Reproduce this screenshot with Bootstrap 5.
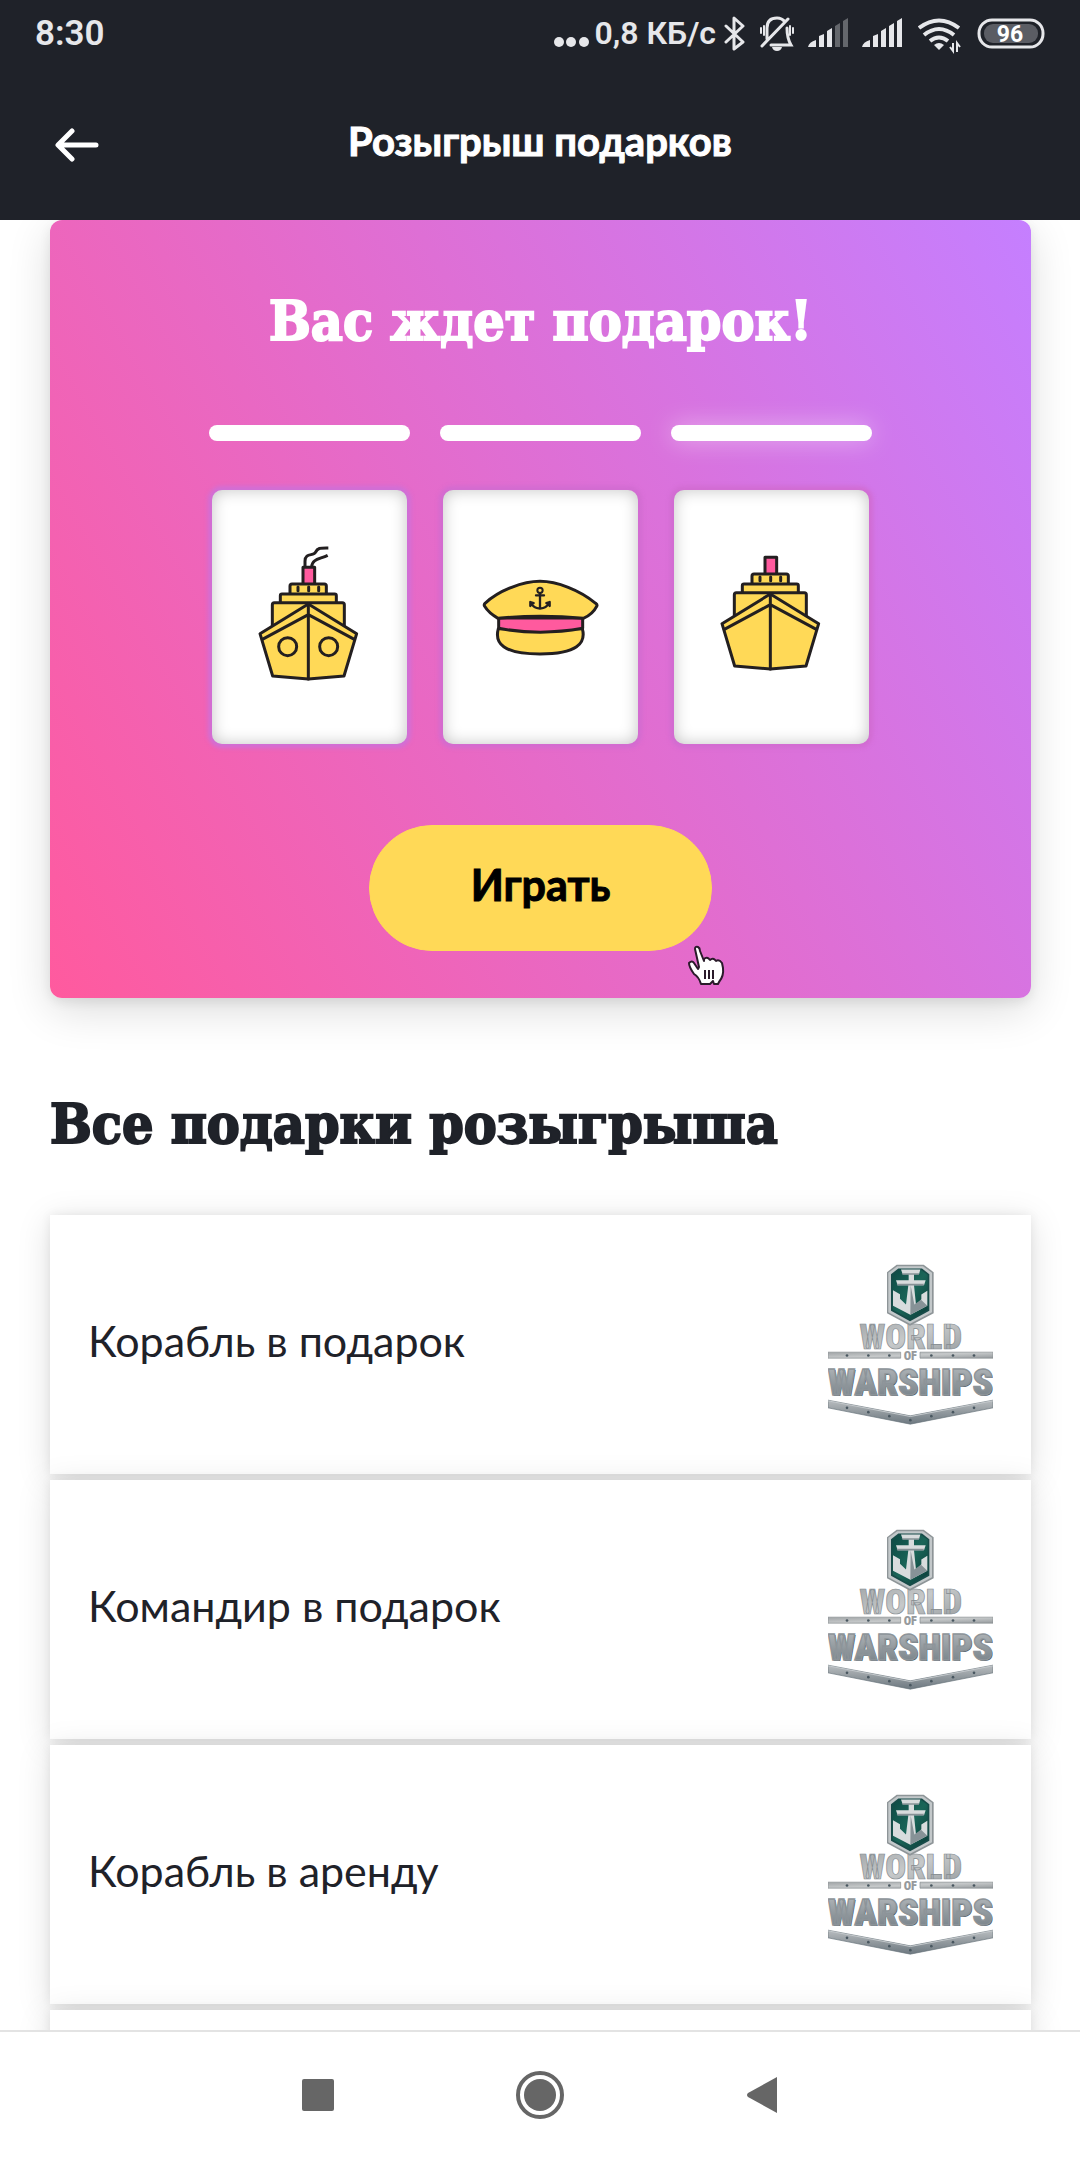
<!DOCTYPE html>
<html lang="ru">
<head>
<meta charset="utf-8">
<meta name="viewport" content="width=device-width, initial-scale=1">
<title>Розыгрыш подарков</title>
<link href="https://cdn.jsdelivr.net/npm/bootstrap@5.3.0/dist/css/bootstrap.min.css" rel="stylesheet">
<style>
  body { font-family: Lato, "Noto Sans", sans-serif; color: #1f2229; background: #fff; }
  .app-top { background: #1f2229; }
  .status-line { height: 66px; padding: 0 35px; font: 600 32px/48px Roboto, sans-serif; color: #e6e7ea; }
  .clock { font-size: 35px; padding-top: 2px; }
  .status-icons svg { flex: none; display: block; }
  .status-icons .icon-step { margin-left: 14px; }
  .title-line { height: 154px; padding: 0 55px; }
  .back-link { width: 44px; padding-top: 3px; }
  .screen-title { font-size: 40px; line-height: 48px; font-weight: 700; padding-bottom: 4px; -webkit-text-stroke: 1px currentColor; }
  .page-area { padding: 0 49px 0 50px; min-height: 0; }
  .slab { font-family: "DejaVu Serif Condensed", "DejaVu Serif", serif; font-weight: 700; font-size: 55px; line-height: 64px; -webkit-text-stroke: 2px currentColor; }
  .promo { background: linear-gradient(60deg, #ff5a9e, #c57fff); border-radius: 12px; height: 778px; padding-top: 69px; box-shadow: 0 12px 44px rgba(0,0,0,.14), 0 4px 12px rgba(0,0,0,.08); }
  .reels { gap: 30px; margin-top: 72px; }
  .reel { width: 201px; }
  .reel-bar { height: 16px; width: 201px; border-radius: 8px; background: #fff; margin-bottom: 49px; }
  .reel-bar.lit { box-shadow: 0 0 24px rgba(255,255,255,.45); }
  .reel-face { width: 195px; height: 254px; border-radius: 10px; background: #fff; box-shadow: inset 0 0 16px rgba(0,0,0,.24), 0 0 4px 4px rgba(208,107,208,.9); }
  .reel-face.cool { box-shadow: inset 0 0 16px rgba(0,0,0,.24), 0 0 4px 4px rgba(205,112,216,.9); }
  .reel-face svg { display: block; width: 100%; height: 100%; }
  .play-btn { margin-top: 81px; width: 343px; height: 126px; padding-bottom: 12px; font-size: 43px; font-weight: 700; line-height: 48px; --bs-btn-bg: #ffd957; --bs-btn-color: #000; --bs-btn-border-color: #ffd957; --bs-btn-hover-bg: #ffd044; -webkit-text-stroke: 1px currentColor; }
  .play-wrap { width: 343px; }
  .pointer { position: absolute; left: 317px; bottom: -35px; }
  .gifts-title { margin: 94px 0 59px; }
  .gifts { gap: 6px; }
  .gift { height: 259px; flex: none; padding: 0 38px; font-size: 43px; line-height: 52px; background: #fff; color: inherit; box-shadow: 0 6px 32px rgba(0,0,0,.13), 0 0 10px rgba(0,0,0,.07); }
  .gift span { padding-bottom: 8px; }
  .logo-word { font-family: "Liberation Sans Narrow", "Roboto Condensed", Roboto, sans-serif; font-weight: 900; }
  .sys-nav { height: 130px; border-top: 2px solid #e3e3e3; padding-bottom: 2px; background: #fff; gap: 173px; z-index: 2; }
  .sys-nav .btn { width: 49px; height: 49px; }
</style>
</head>
<body>
<svg width="0" height="0" class="position-absolute" aria-hidden="true">
  <defs>
    <linearGradient id="steel" x1="0" y1="0" x2="0" y2="1"><stop offset="0" stop-color="#b9bdc0"/><stop offset=".55" stop-color="#8e969b"/><stop offset="1" stop-color="#6e7981"/></linearGradient>
    <linearGradient id="silver" x1="0" y1="0" x2="1" y2="1"><stop offset="0" stop-color="#a0a4a6"/><stop offset=".5" stop-color="#c6c9ca"/><stop offset="1" stop-color="#969b9e"/></linearGradient>
    <linearGradient id="sea" x1="0" y1="0" x2="1" y2="1"><stop offset="0" stop-color="#0e4a44"/><stop offset=".5" stop-color="#1a6558"/><stop offset="1" stop-color="#0a3b38"/></linearGradient>
    <symbol id="ship" viewBox="0 0 585 762">
      <g fill="#ffd957" stroke="#231f20" stroke-width="9" stroke-linejoin="round" stroke-linecap="round">
        <rect x="273" y="232" width="35" height="52" fill="#ff5a9e"/>
        <rect x="234" y="282" width="109" height="32" rx="6"/>
        <path d="M258 291v11M290 291v11M320 291v11" fill="none"/>
        <rect x="205" y="312" width="168" height="30" rx="5"/>
        <path d="M181 425v-81q0-6 6-6h204q6 0 6 6v81z"/>
        <path d="M289 342 144 431l38 127 107 9 107-9 38-127z"/>
        <path d="M151 448 289 374l138 74M289 342v225" fill="none"/>
      </g>
    </symbol>
    <symbol id="wows" viewBox="0 0 495 482">
      <text class="logo-word" x="248" y="254" font-size="104" text-anchor="middle" fill="url(#silver)" stroke="#858c91" stroke-width="2">WORLD</text>
      <path d="M206 2h81l30 22v123l-71 38-69-38V24z" fill="#8e9598"/>
      <path d="M208 6h77l27 20v118l-66 35-65-35V26z" fill="#c3c8ca"/>
      <path d="M211 13h71l22 17v110l-58 31-57-31V30z" fill="#174b48"/>
      <path d="M213 18h67l19 14v104l-53 29-52-29V32z" fill="url(#sea)"/>
      <path d="M219 16h58l-4 14h-15v18h35l-5 15h-30l6 59 16-17V91l18-11v45l-51 27-52-27V78l21 12v14l18 17 7-58h-32l-5-15h38V30h-18z" fill="#d8dcdd"/>
      <path d="M248 64l11 57 20-14 19 18-51 27zM221 27h53l-2 5h-48zM206 59h82l-2 5h-78z" fill="#879297"/>
      <path d="M0 264h218v18H0zM276 264h219v18H276z" fill="url(#silver)" stroke="#878c8e" stroke-width="2"/>
      <text class="logo-word" x="247" y="287" font-size="37" text-anchor="middle" fill="#969a9d">OF</text>
      <text class="logo-word" x="250" y="396" font-size="111" text-anchor="middle" fill="#4c5961">WARSHIPS</text>
      <text class="logo-word" x="247" y="394" font-size="111" text-anchor="middle" fill="url(#steel)" stroke="#8d9499" stroke-width="4">WARSHIPS</text>
      <path d="M0 408 247 455l248-47v23L247 480 0 431z" fill="url(#steel)" stroke="#66727a" stroke-width="2"/>
      <path d="M0 410 247 457l248-47" fill="none" stroke="#c4c9cc" stroke-width="3"/>
      <g fill="#495760"><circle cx="57" cy="274" r="4"/><circle cx="121" cy="274" r="4"/><circle cx="184" cy="274" r="4"/><circle cx="310" cy="274" r="4"/><circle cx="375" cy="274" r="4"/><circle cx="438" cy="274" r="4"/><circle cx="57" cy="431" r="4"/><circle cx="121" cy="444" r="4"/><circle cx="184" cy="456" r="4"/><circle cx="247" cy="468" r="4"/><circle cx="310" cy="456" r="4"/><circle cx="375" cy="444" r="4"/><circle cx="438" cy="431" r="4"/></g>
    </symbol>
    <symbol id="signal" viewBox="0 0 40 30">
      <path d="M0 29q1-5 8-7v7zM11 18l5-2v13h-5zM19 13l5-3v19h-5z"/>
    </symbol>
  </defs>
</svg>

<div class="vh-100 d-flex flex-column overflow-hidden">
  <header class="app-top text-white flex-shrink-0">
    <div class="status-line d-flex align-items-center justify-content-between">
      <div class="clock">8:30</div>
      <div class="status-icons d-flex align-items-center">
        <svg width="36" height="66" fill="#e6e7ea"><circle cx="5" cy="42" r="5"/><circle cx="17" cy="42" r="5"/><circle cx="30" cy="42" r="5"/></svg>
        <span class="ms-1">0,8 КБ/с</span>
        <svg class="ms-2" width="22" height="66" fill="none" stroke="#e6e7ea" stroke-width="3" stroke-linejoin="round" stroke-linecap="round"><path d="M2 26 19 42 10 49V18l9 8L2 42"/></svg>
        <svg class="icon-step" width="34" height="66" fill="none" stroke="#e6e7ea" stroke-width="3" stroke-linecap="round"><path d="M2 46 28 19M7 39V28Q7 18 17 18q5 0 8 4M27 28q0 10 4 17H11"/><path d="M4 26v9M1 28v5M30 26v9M33 28v5" stroke-width="2"/><path d="M12 47h10q-1 4-5 4t-5-4" fill="#e6e7ea" stroke="none"/></svg>
        <svg class="icon-step" width="40" height="30" fill="#e6e7ea"><use href="#signal"/><path d="M27 8l5-3v24h-5zM35 3l5-3v29h-5z" opacity=".35"/></svg>
        <svg class="icon-step" width="40" height="30" fill="#e6e7ea"><use href="#signal"/><path d="M27 8l5-3v24h-5zM35 3l5-3v29h-5z"/></svg>
        <svg class="ms-3" width="43" height="66" fill="none" stroke="#e6e7ea" stroke-width="4"><path d="M1 28q20-15 40 0M6 35q15-12 30 0"/><path d="M12 41q9-7 18 0"/><path d="M16 45q5-4 10 0l-5 5z" fill="#e6e7ea" stroke="none"/><path d="M35 43v8l-3-4M39 52v-9l3 4" stroke-width="2"/></svg>
        <svg class="ms-3" width="68" height="66"><rect x="2" y="20" width="64" height="27" rx="13" fill="none" stroke="#e6e7ea" stroke-width="3"/><rect x="7" y="24" width="54" height="19" rx="9" fill="#5b5d64"/><text x="33" y="42" text-anchor="middle" font-size="23" font-weight="700" fill="#fff">96</text></svg>
      </div>
    </div>
    <div class="title-line d-flex align-items-center">
      <a href="#" class="back-link" aria-label="Назад"><svg class="d-block" width="44" height="34" fill="none" stroke="#fff" stroke-width="5" stroke-linecap="round" stroke-linejoin="round"><path d="M17 3 3 17l14 14M4 17h37"/></svg></a>
      <h1 class="screen-title flex-grow-1 text-center m-0">Розыгрыш подарков</h1>
      <span class="back-link"></span>
    </div>
  </header>

  <main class="page-area flex-grow-1 overflow-hidden">
    <section class="promo d-flex flex-column align-items-center">
      <h2 class="slab text-white m-0">Вас ждет подарок!</h2>
      <div class="reels d-flex justify-content-center">
        <div class="reel d-flex flex-column align-items-center">
          <div class="reel-bar"></div>
          <div class="reel-face cool"><svg viewBox="0 0 585 762"><use href="#ship" width="585" height="762"/><path d="M279 230v-16c0-28 26-14 32-28 6-13 14-12 38-12M299 230c2-24 24-22 48-34" fill="none" stroke="#231f20" stroke-width="9"/><g fill="none" stroke="#231f20" stroke-width="9"><circle cx="227" cy="470" r="27"/><circle cx="350" cy="470" r="27"/></g></svg></div>
        </div>
        <div class="reel d-flex flex-column align-items-center">
          <div class="reel-bar"></div>
          <div class="reel-face"><svg viewBox="0 0 585 762" fill="#ffd957" stroke="#231f20" stroke-width="9" stroke-linejoin="round" stroke-linecap="round">
            <path d="M166 416C154 460 180 492 291 492S430 460 418 416z"/>
            <path d="M167 384v31q124 23 252 0v-31z" fill="#ff5a9e"/>
            <path d="M126 340C170 300 240 274 291 274S410 300 458 340q6 4 3 9-12 24-40 36-128-13-256 0-28-16-40-36-3-5 1-9z"/>
            <path d="M291 310v44M279 316h24M264 338q6 16 27 18 21-2 27-18M262 348v-12l10 3M320 348v-12l-10 3" fill="none" stroke-width="7"/><circle cx="291" cy="301" r="8" fill="none" stroke-width="6"/>
          </svg></div>
        </div>
        <div class="reel d-flex flex-column align-items-center">
          <div class="reel-bar lit"></div>
          <div class="reel-face"><svg viewBox="0 0 585 762"><use href="#ship" y="-30" width="585" height="762"/></svg></div>
        </div>
      </div>
      <div class="play-wrap position-relative">
        <button type="button" class="btn rounded-pill play-btn">Играть</button>
        <svg class="pointer" width="40" height="42" viewBox="0 0 40 42" fill="#fff" stroke="#2b1b2b" stroke-width="2" stroke-linejoin="round"><path d="M13 23 9 5Q9 2 12 3q2 1 2 4l4 10V15q3-3 6 1 3-3 6 1 3-2 6 2l1 5q1 8-4 14l-1 2h-4l-1-3-3 3H15Q13 33 8 30 3 23 3 19q3-3 5 0l4 6z"/><path d="M19 26v9M23 26v9M27 26v9"/></svg>
      </div>
    </section>

    <h2 class="slab gifts-title">Все подарки розыгрыша</h2>
    <div class="gifts d-flex flex-column">
      <a href="#" class="gift d-flex align-items-center justify-content-between text-decoration-none"><span>Корабль в подарок</span><svg width="165" height="161" role="img" aria-label="World of Warships"><use href="#wows"/></svg></a>
      <a href="#" class="gift d-flex align-items-center justify-content-between text-decoration-none"><span>Командир в подарок</span><svg width="165" height="161" role="img" aria-label="World of Warships"><use href="#wows"/></svg></a>
      <a href="#" class="gift d-flex align-items-center justify-content-between text-decoration-none"><span>Корабль в аренду</span><svg width="165" height="161" role="img" aria-label="World of Warships"><use href="#wows"/></svg></a>
      <div class="gift"></div>
    </div>
  </main>

  <nav class="sys-nav flex-shrink-0 d-flex justify-content-center align-items-center position-relative" aria-label="Системная навигация">
    <button type="button" class="btn border-0 p-0 d-flex align-items-center justify-content-center" aria-label="Недавние"><svg width="32" height="32"><rect width="32" height="32" rx="2" fill="#666"/></svg></button>
    <button type="button" class="btn border-0 p-0 d-flex align-items-center justify-content-center" aria-label="Домой"><svg width="48" height="48"><circle cx="24" cy="24" r="22" fill="none" stroke="#666" stroke-width="4"/><circle cx="24" cy="24" r="16" fill="#666"/></svg></button>
    <button type="button" class="btn border-0 p-0 d-flex align-items-center justify-content-center" aria-label="Назад"><svg width="32" height="38"><path d="M31 1v36L2 21q-2-2 0-4z" fill="#666"/></svg></button>
  </nav>
</div>
<script src="https://cdn.jsdelivr.net/npm/bootstrap@5.3.0/dist/js/bootstrap.bundle.min.js"></script>
</body>
</html>
